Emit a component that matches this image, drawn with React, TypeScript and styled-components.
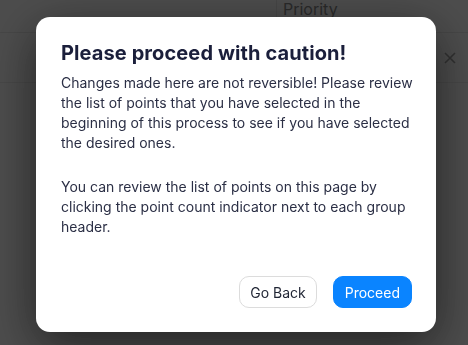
import React from "react";
import styled, { createGlobalStyle } from "styled-components";

const Global = createGlobalStyle`
  html, body { margin: 0; padding: 0; background: #ffffff; }
  body { font-family: Inter, "Noto Sans", sans-serif; width: 468px; height: 345px; overflow: hidden; }
  * { box-sizing: border-box; }
`;

const Page = styled.div`
  width: 468px;
  height: 345px;
  background: #ffffff;
`;

const HeaderRow = styled.div`
  display: grid;
  grid-template-columns: 276px 1fr;
  height: 33px;
  border-bottom: 1px solid #e4e4e4;
`;

const HeaderCell = styled.div<{ $divider?: boolean }>`
  border-left: ${(p) => (p.$divider ? "1px solid #e4e4e4" : "none")};
  padding: 0 0 0 6px;
  font-size: 16px;
  line-height: 18px;
  color: #6b6b6b;
`;

const BodyRow = styled.div`
  display: flex;
  justify-content: flex-end;
  align-items: center;
  height: 50px;
  padding-right: 12px;
  border-bottom: 1px solid #e8e8e8;
  color: #777;
`;

const Overlay = styled.div`
  position: fixed;
  inset: 0;
  background: rgba(24, 24, 24, 0.77);
  padding: 17px 0 0 36px;
`;

const Dialog = styled.div`
  width: 400px;
  height: 315px;
  background: #ffffff;
  border-radius: 14px;
  box-shadow: 0 14px 50px rgba(0, 0, 0, 0.55);
  padding: 22px 20px 24px 25px;
  display: flex;
  flex-direction: column;
`;

const Title = styled.h2`
  margin: 0;
  font-family: Inter, sans-serif;
  font-size: 20px;
  font-weight: 700;
  line-height: 28px;
  color: #1b1f3b;
  letter-spacing: 0.1px;
`;

const Body = styled.div`
  margin-top: 6px;
  display: flex;
  flex-direction: column;
  gap: 24px;
`;

const Para = styled.p`
  margin: 0;
  font-size: 14px;
  line-height: 20px;
  color: #2b2f45;
`;

const Actions = styled.div`
  margin-top: auto;
  padding-right: 4px;
  display: flex;
  justify-content: flex-end;
  gap: 16px;
`;

const Button = styled.button<{ $primary?: boolean }>`
  height: 32px;
  padding: 0 ${(p) => (p.$primary ? 11 : 10)}px;
  border-radius: 10px;
  font-family: Inter, sans-serif;
  font-size: 14px;
  cursor: pointer;
  border: 1px solid ${(p) => (p.$primary ? "#0a84ff" : "#dcdcdc")};
  background: ${(p) => (p.$primary ? "#0a84ff" : "#ffffff")};
  color: ${(p) => (p.$primary ? "#ffffff" : "#1f2433")};
`;

export default function App() {
  return (
    <Page>
      <Global />
      <HeaderRow>
        <HeaderCell />
        <HeaderCell $divider>Priority</HeaderCell>
      </HeaderRow>
      <BodyRow>
        <svg width="12" height="12" viewBox="0 0 12 12">
          <path d="M1 1 L11 11 M11 1 L1 11" stroke="#888" strokeWidth="1.6" />
        </svg>
      </BodyRow>
      <Overlay>
        <Dialog>
          <Title>Please proceed with caution!</Title>
          <Body>
            <Para>
              Changes made here are not reversible! Please review the list of points that you have
              selected in the beginning of this process to see if you have selected the desired ones.
            </Para>
            <Para>
              You can review the list of points on this page by clicking the point count indicator
              next to each group header.
            </Para>
          </Body>
          <Actions>
            <Button>Go Back</Button>
            <Button $primary>Proceed</Button>
          </Actions>
        </Dialog>
      </Overlay>
    </Page>
  );
}
